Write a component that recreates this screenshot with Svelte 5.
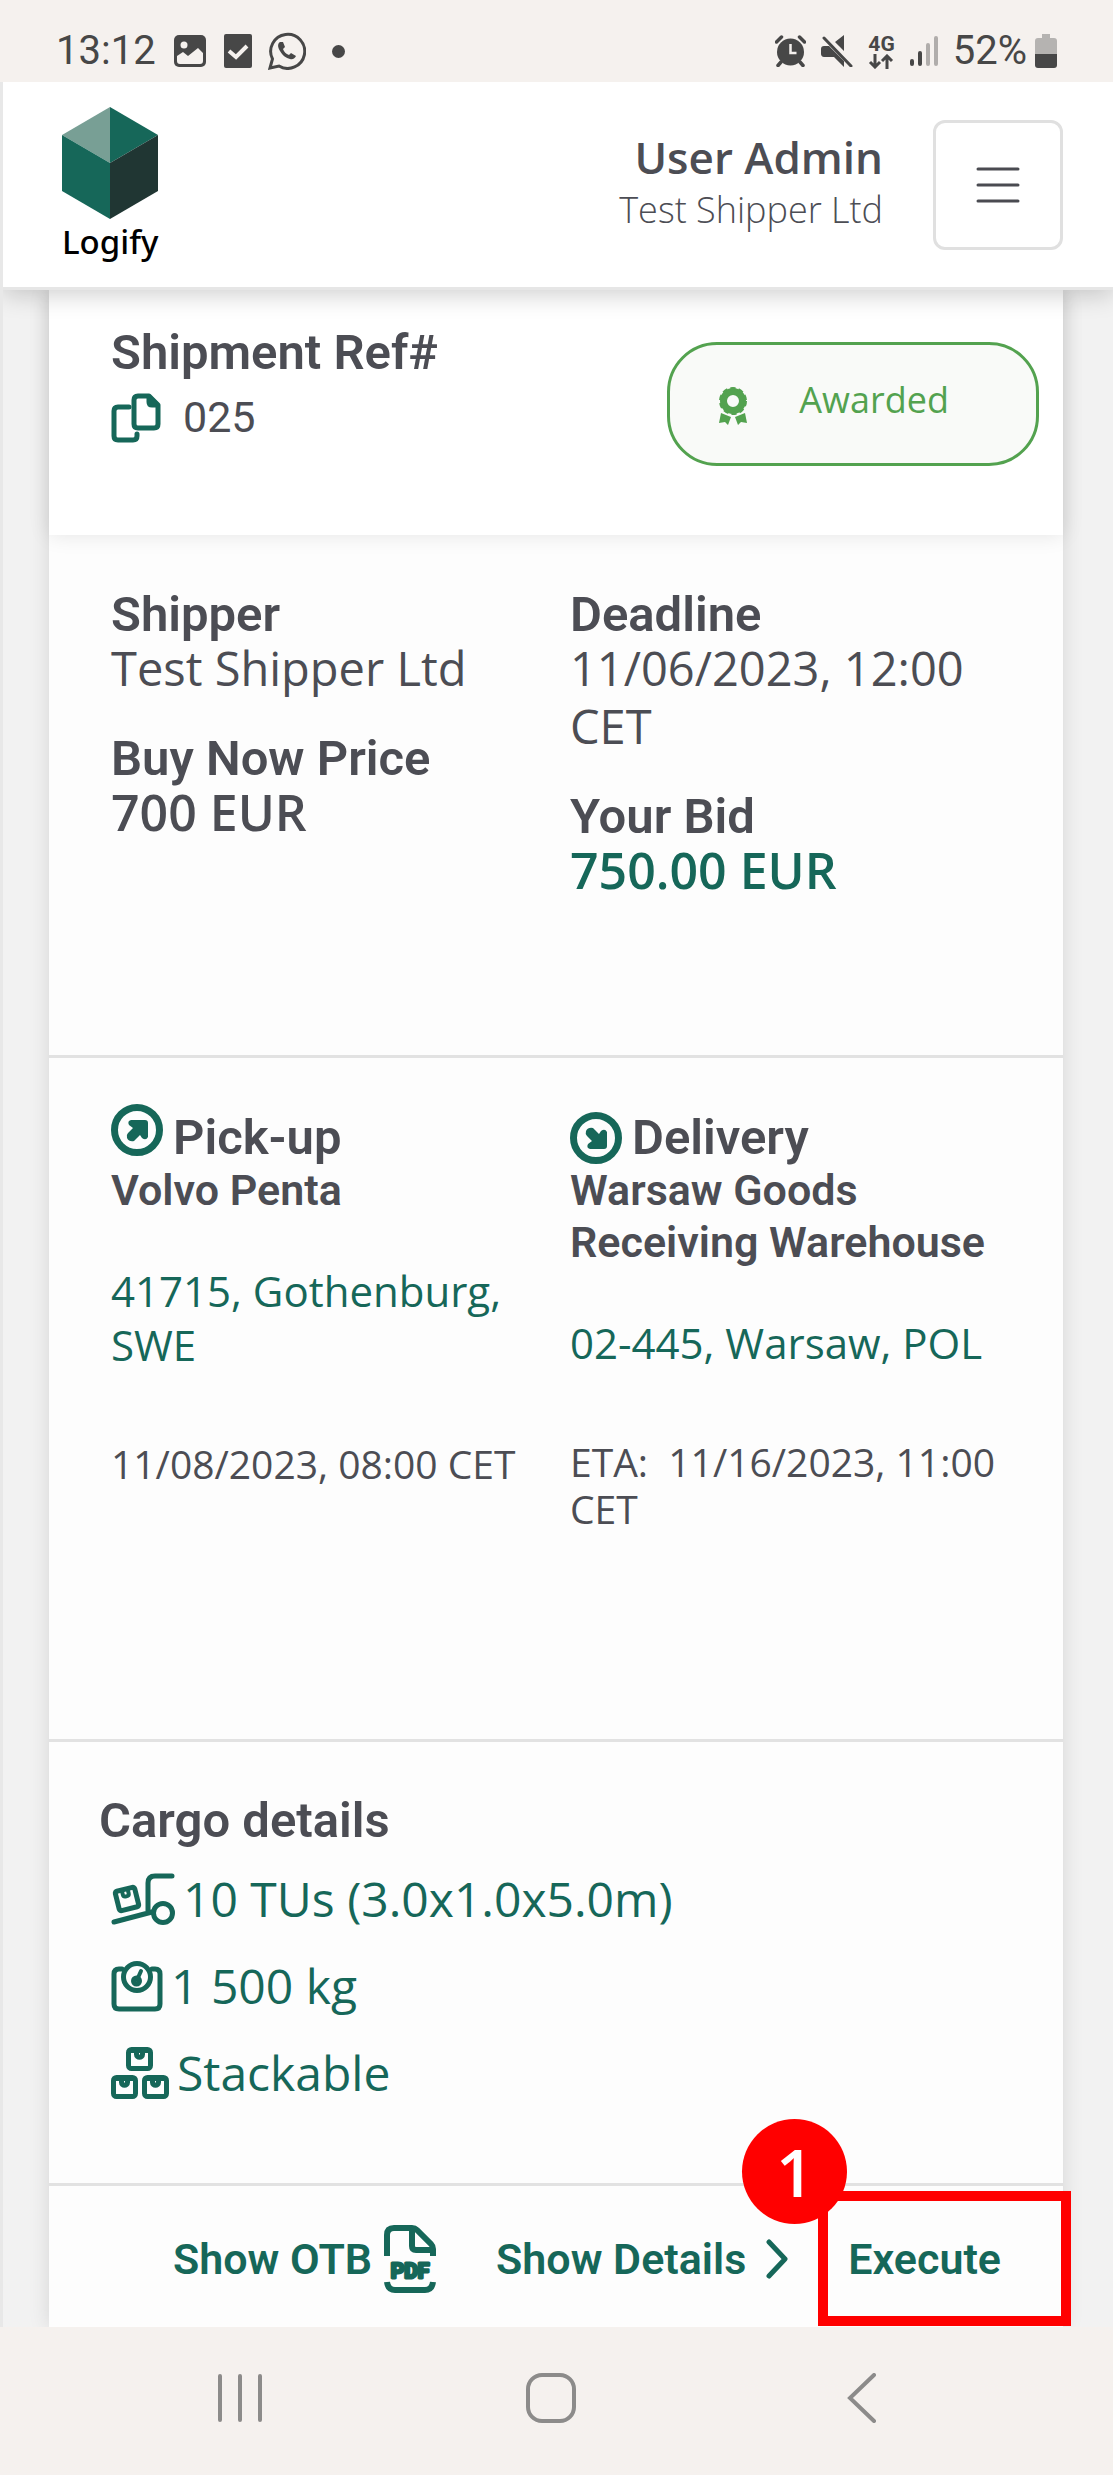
<script lang="ts">
	const user = { name: 'User Admin', company: 'Test Shipper Ltd' };
	const shipment = {
		ref: '025',
		status: 'Awarded',
		shipper: 'Test Shipper Ltd',
		buyNow: '700 EUR',
		deadline: '11/06/2023, 12:00 CET',
		bid: '750.00 EUR'
	};
	const pickup = {
		name: 'Volvo Penta',
		address: '41715, Gothenburg, SWE',
		date: '11/08/2023, 08:00 CET'
	};
	const delivery = {
		name: 'Warsaw Goods Receiving Warehouse',
		address: '02-445, Warsaw, POL',
		date: 'ETA:\u00a0 11/16/2023, 11:00 CET'
	};
</script>

{#snippet box(x: number, y: number)}
	<g transform={`translate(${x} ${y})`}>
		<rect x="2.5" y="2.5" width="22" height="19" rx="3" />
		<path d="M10.5 3v4.5c0 3.5 6 3.5 6 0V3M4 3.5h19" />
	</g>
{/snippet}

<div class="status-bar">
	<div class="status-group">
		<span class="clock">13:12</span>
		<svg class="photo" width="32" height="32" viewBox="0 0 32 32">
			<rect width="32" height="32" rx="5" fill="#474747" />
			<circle cx="10" cy="10" r="3.5" fill="#f5f1ee" />
			<path d="M3 21l6-4 5 4 10-8 5 5v8c0 2-1 3-3 3H6c-2 0-3-1-3-3z" fill="#f5f1ee" />
		</svg>
		<svg class="check" width="28" height="34" viewBox="0 0 28 34">
			<rect width="28" height="34" rx="2" fill="#474747" />
			<path d="M5 17l7 6 11-11" fill="none" stroke="#f5f1ee" stroke-width="4" />
		</svg>
		<svg width="38" height="38" viewBox="0 0 38 38" fill="none" stroke="#474747">
			<path d="M2 36l2.5-9A17 17 0 1 1 11 34z" stroke-width="3" />
			<path
				d="M12 10c-3 2-2 6 0 9 3 5 6 7 10 8 3 1 5-1 6-3l-5-3-2 2c-3-1-5-3-6-6l2-2-2-5z"
				fill="#474747"
				stroke="none"
			/>
		</svg>
		<i class="dot"></i>
	</div>
	<div class="status-group right">
		<svg width="31" height="32" viewBox="0 0 31 32">
			<circle cx="15.5" cy="17" r="13.5" fill="#474747" />
			<path d="M1.5 7l5-5M29.5 7l-5-5M6 27l-3 3.5M25 27l3 3.5" stroke="#474747" stroke-width="3.5" stroke-linecap="round" />
			<path d="M15.5 9v9h6" fill="none" stroke="#f5f1ee" stroke-width="2.5" />
		</svg>
		<svg width="32" height="32" viewBox="0 0 32 32" fill="#474747">
			<path d="M3 11h5l15 15v6L13 22H3c-2 0-3-2-3-3v-5c0-2 1-3 3-3zM14 7l9-7v16z" />
			<path d="M3 3l27 28" stroke="#474747" stroke-width="3" stroke-linecap="round" />
		</svg>
		<div class="net">
			<span>4G</span>
			<svg width="26" height="15" viewBox="0 0 26 15" fill="none" stroke="#474747" stroke-width="3">
				<path d="M7 0v13M2 8l5 5 5-5M19 15V2M14 7l5-5 5 5" />
			</svg>
		</div>
		<svg width="28" height="32" viewBox="0 0 28 32" stroke-width="4" stroke-linecap="round">
			<path d="M2 26v3M10 18v11" stroke="#474747" />
			<path d="M18 10v19M26 3v26" stroke="#b0adab" />
		</svg>
		<span class="battery-text">52%</span>
		<svg width="22" height="34" viewBox="0 0 22 34">
			<path d="M7 0h8v4h4c2 0 3 1 3 3v13H0V7c0-2 1-3 3-3h4z" fill="#b5b3b1" />
			<path d="M0 20h22v11c0 2-1 3-3 3H3c-2 0-3-1-3-3z" fill="#474747" />
		</svg>
	</div>
</div>

<div class="app">
	<header>
		<a class="brand" href="/">
			<svg width="96" height="112" viewBox="0 0 96 112">
				<path d="M48 0L0 28l48 28z" fill="#789f95" />
				<path d="M48 0l48 28-48 28z" fill="#166759" />
				<path d="M0 28l48 28v56L0 84z" fill="#166759" />
				<path d="M96 28L48 56v56l48-28z" fill="#203633" />
			</svg>
			<span>Logify</span>
		</a>
		<div class="account">
			<div class="user">
				<strong>{user.name}</strong>
				<span>{user.company}</span>
			</div>
			<button class="menu" aria-label="Menu">
				<svg width="44" height="36" viewBox="0 0 44 36" stroke="#4a4b51" stroke-width="3" stroke-linecap="round">
					<path d="M2 2h40M2 18h40M2 34h40" />
				</svg>
			</button>
		</div>
	</header>

	<main>
		<section class="summary">
			<div>
				<h2>Shipment Ref#</h2>
				<div class="ref">
					<svg width="50" height="50" viewBox="0 0 50 50" fill="none" stroke="#166759" stroke-width="5" stroke-linecap="round" stroke-linejoin="round">
						<path d="M18 14H7q-4 0-4 4v25q0 4 4 4h15q4 0 4-4v-2" />
						<path d="M27 3h11l9 9v19q0 4-4 4H27q-4 0-4-4V7q0-4 4-4z" />
						<path d="M38 4v5q0 3 3 3h5z" fill="#166759" />
					</svg>
					<span>{shipment.ref}</span>
				</div>
			</div>
			<div class="pill">
				<svg width="28" height="40" viewBox="0 0 28 40" fill="#53a24f">
					<path d="M2 27l10 4-3 8-3-3-6 1zM26 27l-10 4 3 8 3-3 6 1z" />
					<circle cx="14" cy="15" r="9.5" fill="none" stroke="#53a24f" stroke-width="7" />
					<circle cx="14" cy="15" r="12.5" fill="none" stroke="#53a24f" stroke-width="3" stroke-dasharray="5 3" />
				</svg>
				<span>{shipment.status}</span>
			</div>
		</section>

		<section class="columns terms">
			<div class="stack">
				<div>
					<h3>Shipper</h3>
					<p class="value">{shipment.shipper}</p>
				</div>
				<div>
					<h3>Buy Now Price</h3>
					<p class="value price">{shipment.buyNow}</p>
				</div>
			</div>
			<div class="stack">
				<div>
					<h3>Deadline</h3>
					<p class="value">{shipment.deadline}</p>
				</div>
				<div>
					<h3>Your Bid</h3>
					<p class="value price bid">{shipment.bid}</p>
				</div>
			</div>
		</section>

		<section class="columns route">
			<div>
				<h3 class="stop">
					<svg class="up" width="52" height="52" viewBox="0 0 52 52" fill="#166759">
						<circle cx="26" cy="26" r="22.5" fill="none" stroke="#166759" stroke-width="7" />
						<path d="M20 16h14q3 0 3 3v14q-2 4-6 1l-2-3-6 6q-5 1-7-3-1-3 1-5l5-5-4-3q-2-4 2-5z" />
					</svg>
					Pick-up
				</h3>
				<p class="place">{pickup.name}</p>
				<p class="address">{pickup.address}</p>
				<p class="date">{pickup.date}</p>
			</div>
			<div>
				<h3 class="stop">
					<svg width="52" height="52" viewBox="0 0 52 52" fill="#166759">
						<circle cx="26" cy="26" r="22.5" fill="none" stroke="#166759" stroke-width="7" />
						<path d="M20 37h14q3 0 3-3V20q-2-4-6-1l-2 3-6-6q-5-1-7 3-1 3 1 5l5 5-4 3q-2 4 2 5z" />
					</svg>
					Delivery
				</h3>
				<p class="place">{delivery.name}</p>
				<p class="address">{delivery.address}</p>
				<p class="date">{delivery.date}</p>
			</div>
		</section>

		<section class="cargo">
			<h3>Cargo details</h3>
			<ul>
				<li>
					<svg width="64" height="52" viewBox="0 0 64 52" fill="none" stroke="#166759" stroke-width="5" stroke-linecap="round" stroke-linejoin="round">
						<path d="M61 3H44q-7 0-7 7v29M3 49l38-10" />
						<circle cx="52" cy="40" r="9.5" />
						<g transform="rotate(-14 16 26)">
							<rect x="6" y="16" width="20" height="20" rx="2" />
							<path d="M13 17v4c0 3 6 3 6 0v-4" stroke-width="4" />
						</g>
					</svg>
					10 TUs (3.0x1.0x5.0m)
				</li>
				<li>
					<svg width="52" height="52" viewBox="0 0 52 52" fill="none" stroke="#166759" stroke-width="5" stroke-linecap="round">
						<path d="M11 9H8q-5 0-5 5v30q0 5 5 5h36q5 0 5-5V14q0-5-5-5h-3" />
						<circle cx="26" cy="17" r="13.5" />
						<path d="M26 20l4-9" stroke-width="4" />
						<circle cx="25.5" cy="21" r="3" />
					</svg>
					1 500 kg
				</li>
				<li>
					<svg width="58" height="52" viewBox="0 0 58 52" fill="none" stroke="#166759" stroke-width="5">
						{@render box(15, 0)}
						{@render box(0, 28)}
						{@render box(31, 28)}
					</svg>
					Stackable
				</li>
			</ul>
		</section>

		<footer>
			<a href="#otb">
				Show OTB
				<svg width="52" height="68" viewBox="0 0 52 68" fill="none" stroke="#166759" stroke-width="6">
					<path d="M3 31V10q0-7 7-7h18q3 0 5 2l14 14q2 2 2 5v7M28 3v18q0 4 4 4h17M3 57q1 8 8 8h30q7 0 8-8" />
					<text x="26" y="53" class="pdf">PDF</text>
				</svg>
			</a>
			<a class="details" href="#details">
				Show Details
				<svg width="22" height="40" viewBox="0 0 22 40" fill="none" stroke="#166759" stroke-width="5" stroke-linecap="round" stroke-linejoin="round">
					<path d="M3 3l16 17L3 37" />
				</svg>
			</a>
			<div class="execute">
				<button>Execute</button>
				<span class="highlight"></span>
				<span class="step">1</span>
			</div>
		</footer>
	</main>
</div>

<nav>
	<button aria-label="Recent apps">
		<svg width="46" height="50" viewBox="0 0 46 50">
			<path d="M3 3v44M23 3v44M43 3v44" />
		</svg>
	</button>
	<button aria-label="Home">
		<svg width="50" height="50" viewBox="0 0 50 50">
			<rect x="2" y="2" width="46" height="46" rx="14" />
		</svg>
	</button>
	<button aria-label="Back">
		<svg width="30" height="50" viewBox="0 0 30 50">
			<path d="M27 2L3 25l24 23" />
		</svg>
	</button>
</nav>

<style>
	:global(*) {
		box-sizing: border-box;
	}
	:global(body) {
		background: #f5f1ee;
		color: #4c4d54;
		font-family: 'Open Sans', 'Noto Sans', sans-serif;
	}
	svg {
		display: block;
		flex: none;
	}
	h2,
	h3,
	p,
	ul {
		margin: 0;
		padding: 0;
	}
	button {
		border: 0;
		padding: 0;
		background: none;
		color: inherit;
		font: inherit;
	}
	a {
		color: inherit;
		text-decoration: none;
	}
	.status-bar {
		display: flex;
		justify-content: space-between;
		padding: 20px 56px 0;
		color: #474747;
		font: 40px/62px Roboto, sans-serif;
	}
	.status-group {
		display: flex;
		align-items: center;
		height: 62px;
	}
	.clock {
		margin-right: 18px;
	}
	.photo {
		margin-right: 18px;
	}
	.check {
		margin-right: 16px;
	}
	.dot {
		width: 13px;
		height: 13px;
		margin-left: 26px;
		border-radius: 50%;
		background: #474747;
	}
	.right {
		gap: 15px;
	}
	.battery-text {
		margin-right: -7px;
	}
	.net {
		font: 700 21px/20px Roboto, sans-serif;
	}
	.app {
		background: #f2f2f2;
		border-left: 3px solid #e8e8e8;
		overflow: hidden;
	}
	header {
		position: relative;
		z-index: 1;
		display: flex;
		justify-content: space-between;
		padding: 22px 50px 22px 59px;
		background: #fff;
		border-bottom: 3px solid #e6e6e6;
		box-shadow: 0 4px 24px rgba(0, 0, 0, 0.2);
	}
	.brand {
		display: flex;
		flex-direction: column;
		align-items: center;
		padding-top: 3px;
		color: #000;
		font: 500 33px/46px 'Noto Sans', sans-serif;
	}
	.account {
		display: flex;
		align-items: center;
		gap: 50px;
	}
	.user {
		display: flex;
		flex-direction: column;
		align-items: flex-end;
		font-size: 36px;
		line-height: 56px;
		font-weight: 300;
	}
	.user strong {
		font-size: 44px;
		line-height: 50px;
		font-weight: 600;
	}
	.menu {
		display: grid;
		place-items: center;
		width: 130px;
		height: 130px;
		border: 3px solid #e0e0e0;
		border-radius: 12px;
	}
	main {
		margin: 0 50px 0 46px;
		background: #fdfdfd;
		box-shadow: 0 0 20px rgba(0, 0, 0, 0.12);
	}
	h2,
	h3 {
		font: 600 49px/48px Roboto, sans-serif;
	}
	.summary {
		display: flex;
		justify-content: space-between;
		align-items: flex-start;
		padding: 39px 24px 69px 62px;
		background: #fff;
		box-shadow: 0 0 20px rgba(0, 0, 0, 0.1);
	}
	.ref {
		display: flex;
		gap: 22px;
		margin-top: 16px;
		font: 43px/48px Roboto, sans-serif;
	}
	.pill {
		display: flex;
		align-items: flex-end;
		gap: 52px;
		margin-top: 13px;
		padding: 29px 87px 37px 49px;
		border: 3px solid #53a24f;
		border-radius: 50px;
		background: #f9faf8;
		color: #53a24f;
		font-size: 36px;
		line-height: 52px;
	}
	.columns {
		display: grid;
		grid-template-columns: 1fr 1fr;
		gap: 28px;
		padding: 56px 62px 156px;
		border-bottom: 3px solid #e2e2e2;
	}
	.stack {
		display: flex;
		flex-direction: column;
		gap: 38px;
	}
	.value {
		font-size: 47px;
		line-height: 58px;
	}
	.price {
		font-size: 50px;
		font-weight: 600;
	}
	.bid {
		color: #166759;
	}
	.route {
		padding: 46px 62px 207px;
	}
	.stop {
		display: flex;
		align-items: flex-end;
		gap: 10px;
		height: 60px;
		line-height: 52px;
	}
	.up {
		align-self: flex-start;
	}
	.place {
		font: 600 43px/52px Roboto, sans-serif;
	}
	.address {
		margin-top: 48px;
		color: #166759;
		font-size: 42px;
		line-height: 54px;
	}
	.date {
		margin-top: 68px;
		font-size: 39px;
		line-height: 47px;
	}
	.cargo {
		padding: 55px 50px 67px;
		border-bottom: 3px solid #e2e2e2;
	}
	.cargo ul {
		margin-top: 10px;
		padding-left: 12px;
		list-style: none;
		color: #166759;
		font-size: 48px;
		line-height: 87px;
	}
	.cargo li {
		display: flex;
		align-items: center;
		gap: 8px;
	}
	footer {
		display: flex;
		justify-content: flex-end;
		align-items: center;
		gap: 60px;
		padding: 39px 62px 34px;
		color: #166759;
		font: 600 43px/60px Roboto, sans-serif;
	}
	footer a {
		display: flex;
		align-items: center;
		gap: 12px;
	}
	footer .details {
		gap: 20px;
	}
	.pdf {
		font: 700 21px Roboto, sans-serif;
		fill: #166759;
		stroke-width: 3px;
		stroke-linejoin: round;
		text-anchor: middle;
	}
	.execute {
		position: relative;
	}
	.highlight {
		position: absolute;
		inset: -38px -70px -37px -30px;
		border: 10px solid #f00;
		pointer-events: none;
	}
	.step {
		position: absolute;
		top: -110px;
		left: -106px;
		width: 105px;
		height: 105px;
		border-radius: 50%;
		background: #f00;
		color: #fff;
		font: 600 66px/105px 'Open Sans', sans-serif;
		text-align: center;
	}
	nav {
		display: grid;
		grid-template-columns: repeat(3, 1fr);
		padding: 46px 95px 52px 84px;
	}
	nav button {
		display: flex;
		justify-content: center;
	}
	nav svg {
		fill: none;
		stroke: #8c8b8a;
		stroke-width: 4px;
		stroke-linecap: round;
	}
</style>
